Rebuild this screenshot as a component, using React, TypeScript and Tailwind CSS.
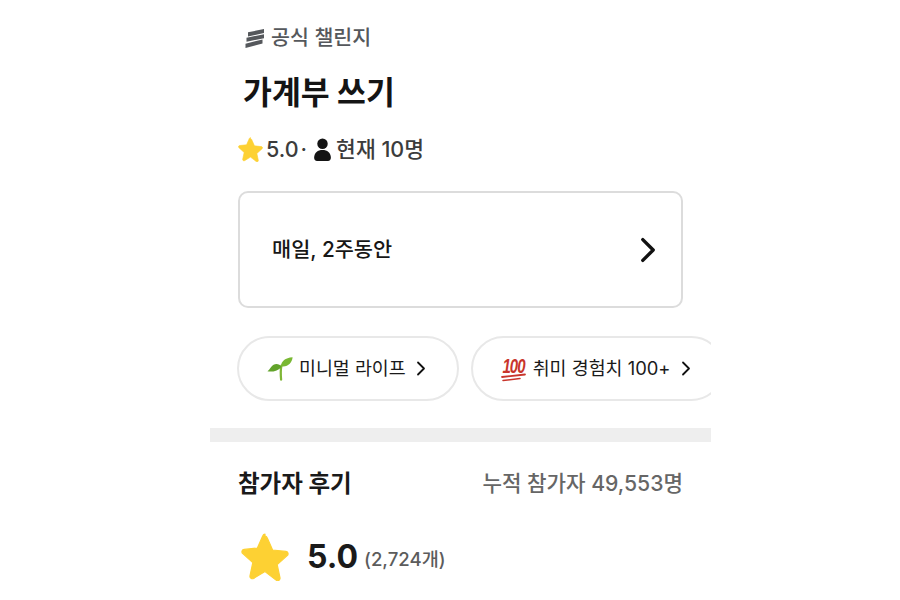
import type React from "react"

const Star = ({ className }: { className: string }) => (
  <svg viewBox="0 0 24 24" className={className}>
    <path
      d="M12 1.600c.5 0 .9.3 1.100.8l2.700 6.100 6.600.7c1.100.1 1.500 1.400.7 2.100l-5 4.500 1.400 6.600c.2 1-.9 1.800-1.800 1.300L12 19.300l-5.700 3.400c-.9.5-2-.3-1.800-1.300l1.400-6.600-5-4.500c-.8-.7-.4-2 .7-2.100l6.600-.7 2.700-6.100c.2-.5.6-.8 1.100-.8z"
      fill="#fdd133"
      stroke="#fdd133"
      strokeWidth="0.6"
      strokeLinejoin="round"
    />
  </svg>
)

const Chevron = ({ className, width = 2 }: { className: string; width?: number }) => (
  <svg viewBox="0 0 12 20" fill="none" stroke="#111" strokeWidth={width} strokeLinecap="round" strokeLinejoin="round" className={className}>
    <path d="M2 2l8 8-8 8" />
  </svg>
)

const Logo = () => (
  <svg viewBox="0 0 20 20" className="h-[21px] w-[20px]" fill="#55585c">
    <path d="M3 3.800L19 .6v4L3 8z" />
    <path d="M1.500 9.200L19 5.800v4L1.500 13.200z" />
    <path d="M0.500 15.200L17.500 11v4L0.500 19.600z" />
  </svg>
)

const Sprout = () => (
  <svg viewBox="0 0 30 28" className="h-[27px] w-[28px]">
    <path d="M16.500 11c-.8 4-.9 9-.3 15" fill="none" stroke="#7fb636" strokeWidth="2.400" strokeLinecap="round" />
    <path d="M16.500 12c-2-3.500-8-4.500-11 .5-1.400 2-2.500 3.500-4 4.500 5 1 12-.5 15-5z" fill="#62a32a" />
    <path d="M16 11.500c.3-5 4.500-9 12.500-9.500-.5 6-5.500 11-12.500 9.500z" fill="#79b833" />
  </svg>
)

const Hundred = () => (
  <svg viewBox="0 0 28 27" className="h-[27px] w-[28px]" fill="none" stroke="#c8352b" strokeLinecap="round">
    <text transform="translate(2.500 18) scale(1 1.300)" fontFamily="'Liberation Sans', sans-serif" fontStyle="italic" fontWeight="700" fontSize="15" letterSpacing="-1" fill="#c8352b" stroke="none">100</text>
    <path d="M2 22L25 19.500" strokeWidth="1.800" />
    <path d="M3 25.500L20 23.500" strokeWidth="1.500" />
  </svg>
)

const Chip = ({ icon, label }: { icon: React.ReactNode; label: string }) => (
  <div className="flex h-[65px] shrink-0 items-center rounded-full border-2 border-[#e8e8e8] bg-white pl-[27px] pr-[31px]">
    {icon}
    <span className="ml-[5px] text-[18.400px] text-[#1a1a1a]">{label}</span>
    <Chevron className="ml-[10px] h-[15px] w-[10px]" width={2.400} />
  </div>
)

export default function App() {
  return (
    <div className="h-[600px] overflow-hidden bg-white font-['Inter','Noto_Sans_CJK_KR',sans-serif]">
      <div className="ml-[210px] w-[501px] overflow-hidden">
        <div className="px-[28px]">
          <div className="mt-[26px] flex h-[24px] items-center gap-[6px] pl-[7px]">
            <Logo />
            <span className="text-[20.600px] font-medium text-[#55585c]">공식 챌린지</span>
          </div>
          <h1 className="mt-[24px] pl-[5px] text-[31.400px] font-bold leading-[38px] text-[#141414]">가계부 쓰기</h1>
          <div className="mt-[24px] flex h-[26px] items-center text-[21.500px] font-medium text-[#3c3c3c]">
            <Star className="h-[25px] w-[25px] shrink-0" />
            <span className="ml-[3px]">5.0</span>
            <span className="ml-[2px]">·</span>
            <svg viewBox="0 0 16 22" className="ml-[7px] h-[23px] w-[17px]" fill="#141414">
              <circle cx="8" cy="5.500" r="5" />
              <path d="M0 19c0-5 3.500-7.500 8-7.500s8 2.500 8 7.500c0 1.800-1 3-2.800 3H2.800C1 22 0 20.800 0 19z" />
            </svg>
            <span className="ml-[5px]">현재 10명</span>
          </div>
          <div className="mt-[29px] flex h-[117px] items-center justify-between rounded-[10px] border-2 border-[#dcdcdc] pl-[32px] pr-[25px]">
            <span className="text-[20.800px] font-medium text-[#171717]">매일, 2주동안</span>
            <Chevron className="h-[26px] w-[16px]" width={2.600} />
          </div>
        </div>
        <div className="mt-[28px] flex gap-[12px] overflow-hidden pl-[27px]">
          <Chip icon={<Sprout />} label="미니멀 라이프" />
          <Chip icon={<Hundred />} label="취미 경험치 100+" />
        </div>
        <div className="mt-[27px] h-[14px] bg-[#eeeeee]" />
        <div className="px-[28px]">
          <div className="mt-[27px] flex h-[30px] items-center justify-between">
            <h2 className="text-[23.500px] font-bold text-[#1a1a1a]">참가자 후기</h2>
            <span className="text-[21.200px] font-medium text-[#666666]">누적 참가자 49,553명</span>
          </div>
          <div className="mt-[31px] flex h-[54px] items-center pl-[3px]">
            <Star className="h-[48px] w-[48px] shrink-0" />
            <span className="ml-[18px] text-[32px] font-bold text-[#1a1a1a]">5.0</span>
            <span className="ml-[6px] mt-[5px] text-[18.600px] font-medium text-[#5c5c5c]">(2,724개)</span>
          </div>
        </div>
      </div>
    </div>
  )
}
